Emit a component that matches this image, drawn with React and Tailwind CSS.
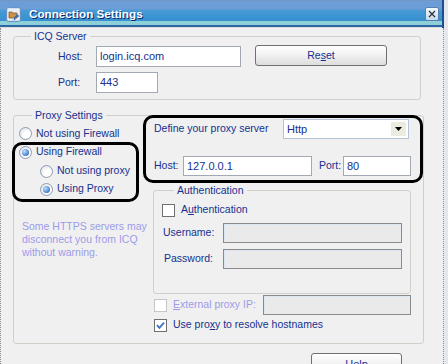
import React from 'react';

const Radio = ({ checked }) => (
    <span className="flex h-[13px] w-[13px] shrink-0 items-center justify-center rounded-full border border-[#8d9cb2] bg-[radial-gradient(circle_at_65%_65%,#ffffff_35%,#d3d7dd)]">
        {checked && <span className="h-[7px] w-[7px] rounded-full bg-[radial-gradient(circle_at_35%_35%,#bfe0fc,#3a76c8_75%)]" />}
    </span>
);

const Check = ({ checked, disabled }) => (
    <span className={`flex h-[13px] w-[13px] shrink-0 items-center justify-center border bg-white ${disabled ? 'border-[#c6c6c6]' : 'border-[#6f6f6f]'}`}>
        {checked && (
            <svg width="9" height="9" viewBox="0 0 9 9">
                <path d="M1 4.2 L3.4 6.8 L8 1.6" fill="none" stroke="#3d72c4" strokeWidth="1.8" />
            </svg>
        )}
    </span>
);

// plain text box
const Field = ({ children, className }) => (
    <div className={`flex shrink-0 items-center border border-[#a2a9b2] bg-white px-[3px] text-[11px] text-[#15308f] ${className}`}>
        {children}
    </div>
);

const DisabledField = ({ className }) => (
    <div className={`shrink-0 border border-[#8a8a8a] bg-[#eaeaea] shadow-[inset_1px_1px_0_#d9e7f5] ${className}`} />
);

const TitleIcon = () => (
    <svg width="15" height="15" viewBox="0 0 15 15" className="ml-[6px] shrink-0">
        <rect x="0.5" y="0.5" width="14" height="14" rx="2" fill="#cfe2f4" stroke="#6a90be" />
        <rect x="2" y="2" width="11" height="11" fill="#e8f1fa" />
        <path d="M3 5h3l1 1h4v5H3z" fill="#c99247" stroke="#8b5a24" strokeWidth="0.8" />
        <path d="M8.5 13 q0-4 3.5-4" fill="none" stroke="#2f6cc0" strokeWidth="1.5" />
        <path d="M10.5 7 L13.5 9 L10.5 11z" fill="#2f6cc0" />
    </svg>
);

export default function App() {
    return (
        <div className="flex h-[364px] w-[448px] overflow-hidden bg-[#e4e7ec] text-[10.5px] text-[#15308f] [font-family:'Liberation_Sans',Arial,sans-serif]">
            <div className="flex w-[444px] shrink-0 flex-col">
                {/* title bar */}
                <div className="flex h-[28px] shrink-0 items-center border-r-2 border-[#1f4d92] bg-[linear-gradient(to_bottom,#7d90b2_0px,#6c9dd6_1px,#6c9dd6_9px,#4a9ad6_10px,#3b96d3_16px,#3a8fcf_21px,#8dd0d7_21px,#8dd0d7_25px,#2f66a8_25px,#2f66a8_27px,#dcdcdc_27px)]">
                    <TitleIcon />
                    <span className="ml-[8px] text-[11.7px] font-bold text-white [text-shadow:1px_1px_0_#0b2a6e]">Connection Settings</span>
                    <span className="mr-[3px] ml-auto flex h-[14px] w-[14px] items-center justify-center rounded-[2px] border border-[#5a7fb0] bg-[linear-gradient(to_bottom,#f4f9fd,#c3dbee)]">
                        <svg width="8" height="8" viewBox="0 0 8 8">
                            <path d="M1 1L7 7M7 1L1 7" stroke="#2b2b2b" strokeWidth="1.2" />
                        </svg>
                    </span>
                </div>

                {/* body */}
                <div className="flex-1 border-r border-l border-dotted border-r-solid border-[#8a8a8a] bg-[#f0f0f0] pt-[2px] pl-[12px]">
                    <fieldset className="w-[408px] rounded-[3px] border border-[#d0d0c8]">
                        <legend className="ml-[17px] px-[3px] leading-[13px]">ICQ Server</legend>
                        <div className="pt-[3px] pb-[6px] pl-[44px]">
                            <div className="flex h-[21px] items-start">
                                <span className="flex h-[21px] w-[38px] items-center">Host:</span>
                                <Field className="h-[21px] w-[145px]">login.icq.com</Field>
                                <button className="-mt-[1px] ml-[14px] h-[21px] w-[132px] rounded-[3px] border border-[#707070] bg-[linear-gradient(to_bottom,#ffffff,#f2f2f2_45%,#dcdcdc)] text-[#15308f]">
                                    Re<span className="underline">s</span>et
                                </button>
                            </div>
                            <div className="mt-[5px] flex h-[21px] items-center">
                                <span className="w-[38px]">Port:</span>
                                <Field className="h-[21px] w-[62px]">443</Field>
                            </div>
                        </div>
                    </fieldset>

                    <fieldset className="mt-[9px] w-[408px] rounded-[3px] border border-[#d0d0c8]">
                        <legend className="ml-[18px] px-[3px] leading-[13px]">Proxy Settings</legend>
                        <div className="flex pb-[9px]">
                            {/* left column */}
                            <div className="w-[129px] shrink-0">
                                <div className="mt-[3px] flex h-[17px] items-center gap-[4px] pl-[5px] whitespace-nowrap">
                                    <Radio />Not using Firewall
                                </div>
                                <div className="-ml-[2px] w-[127px] rounded-[10px] border-[3px] border-black pb-[1px]">
                                    <div className="flex h-[14px] items-center gap-[4px] pl-[4px] whitespace-nowrap">
                                        <Radio checked />Using Firewall
                                    </div>
                                    <div className="mt-[3px] flex h-[18px] items-center gap-[4px] pl-[25px] whitespace-nowrap">
                                        <Radio />Not using proxy
                                    </div>
                                    <div className="flex h-[18px] items-center gap-[4px] pl-[25px] whitespace-nowrap">
                                        <Radio checked />Using Proxy
                                    </div>
                                </div>
                                <p className="mt-[18px] pl-[8px] leading-[13px] whitespace-nowrap text-[#9c9ce8]">
                                    Some HTTPS servers may<br />disconnect you from ICQ<br />without warning.
                                </p>
                            </div>

                            {/* right column */}
                            <div className="-mt-[7px] w-[280px] shrink-0">
                                <div className="rounded-[10px] border-[3px] border-black pt-[1px] pb-[4px] pl-[8px]">
                                    <div className="flex h-[20px] items-center">
                                        <span className="w-[129px] whitespace-nowrap">Define your proxy server</span>
                                        <div className="flex h-[20px] w-[126px] items-center border border-[#b5c4d6] bg-white pr-[2px] pl-[3px] text-[11px]">
                                            <span className="flex-1">Http</span>
                                            <span className="flex h-[14px] w-[15px] items-center justify-center bg-[#ecebdf]">
                                                <svg width="7" height="4" viewBox="0 0 7 4">
                                                    <path d="M0 0h7L3.5 4z" fill="#000" />
                                                </svg>
                                            </span>
                                        </div>
                                    </div>
                                    <div className="mt-[17px] flex h-[20px] items-center">
                                        <span className="w-[29px]">Host:</span>
                                        <Field className="h-[20px] w-[129px]">127.0.0.1</Field>
                                        <span className="ml-[7px] w-[24px]">Port:</span>
                                        <Field className="h-[20px] w-[68px]">80</Field>
                                    </div>
                                </div>

                                <fieldset className="mt-[1px] ml-[10px] w-[258px] rounded-[3px] border border-[#d0d0c8]">
                                    <legend className="ml-[20px] px-[3px] leading-[13px]">Authentication</legend>
                                    <div className="pt-[4px] pb-[24px]">
                                        <div className="flex h-[18px] items-center gap-[6px] pl-[8px]">
                                            <Check />
                                            <span>A<span className="underline">u</span>thentication</span>
                                        </div>
                                        <div className="mt-[4px] flex h-[20px] items-center pl-[9px]">
                                            <span className="w-[60px]">Username:</span>
                                            <DisabledField className="h-[20px] w-[179px]" />
                                        </div>
                                        <div className="mt-[6px] flex h-[20px] items-center pl-[10px]">
                                            <span className="w-[59px]">Password:</span>
                                            <DisabledField className="h-[20px] w-[179px]" />
                                        </div>
                                    </div>
                                </fieldset>

                                <div className="mt-[1px] flex h-[20px] items-center pl-[11px]">
                                    <div className="flex w-[109px] items-center gap-[6px] text-[#9c9ce8]">
                                        <Check disabled />
                                        <span><span className="underline">E</span>xternal proxy IP:</span>
                                    </div>
                                    <DisabledField className="h-[20px] w-[148px]" />
                                </div>
                                <div className="mt-[1px] flex h-[18px] items-center gap-[6px] pl-[11px]">
                                    <Check checked />
                                    <span>Use pro<span className="underline">x</span>y to resolve hostnames</span>
                                </div>
                            </div>
                        </div>
                    </fieldset>

                    <div className="mt-[9px] pl-[298px]">
                        <button className="h-[23px] w-[91px] rounded-[3px] border border-[#707070] bg-[linear-gradient(to_bottom,#ffffff,#f2f2f2_45%,#dcdcdc)] text-[11px] text-[#15308f]">
                            <span className="underline">H</span>elp
                        </button>
                    </div>
                </div>
            </div>
            <div className="w-[4px] shrink-0 bg-[#e4e7ec]" />
        </div>
    );
}
